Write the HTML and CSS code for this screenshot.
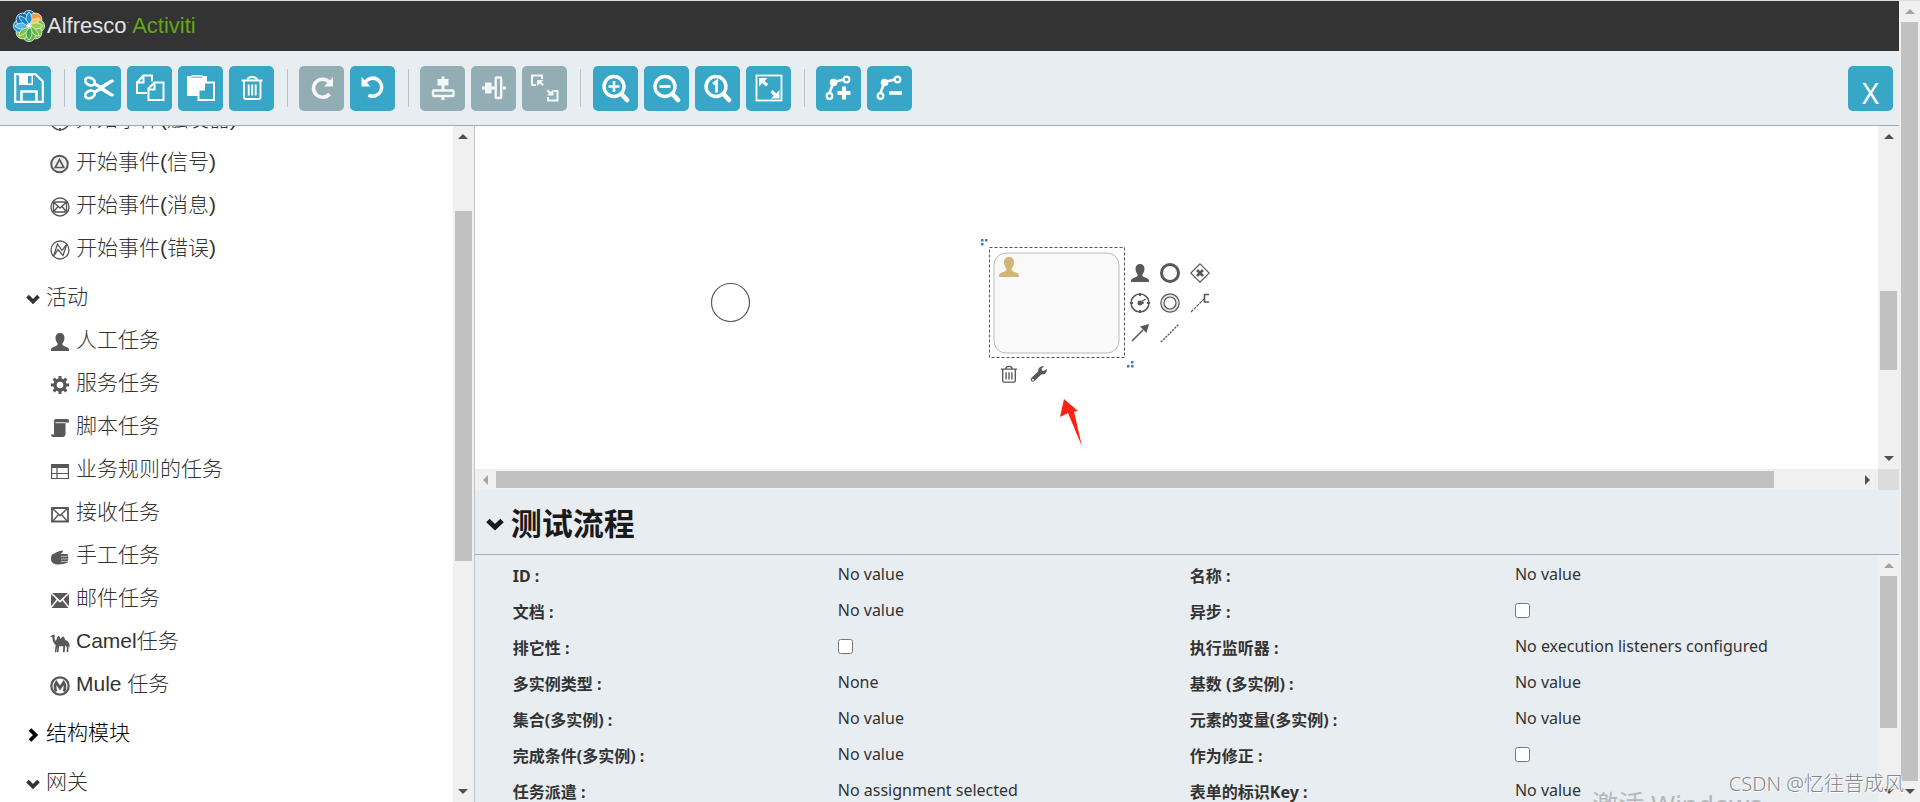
FILE: index.html
```
<!DOCTYPE html>
<html lang="zh-CN">
<head>
<meta charset="utf-8">
<title>Alfresco Activiti</title>
<link rel="stylesheet" href="styles.css">
</head>
<body>
<svg class="sprite" aria-hidden="true">
  <symbol id="i-person" viewBox="0 0 20 20"><path d="M10 1c3 0 4.600 2 4.500 5-.1 2.300-.9 4-2 5.200-.3 1.500.1 2.200 1.500 2.800l3.500 1.500c1.300.6 1.500 1.500 1.500 3.500H1c0-2 .2-2.900 1.500-3.500L6 14c1.400-.6 1.800-1.300 1.500-2.800-1.100-1.200-1.900-2.900-2-5.200C5.400 3 7 1 10 1z"/></symbol>
  <symbol id="i-timer" viewBox="0 0 20 20"><circle cx="10" cy="10" r="9" fill="none" stroke="currentColor" stroke-width="1.500"/><path d="M10 0v3M10 17v3M0 10h3M17 10h3" stroke="currentColor" stroke-width="2"/><circle cx="10" cy="10" r="2.500"/><path d="M10 10l5.500-4M10 10h4" stroke="currentColor" stroke-width="1.400"/></symbol>
  <symbol id="i-signal" viewBox="0 0 20 20"><circle cx="9.500" cy="10" r="8.300" fill="#eee" stroke="currentColor" stroke-width="2"/><path d="M9.500 5.500l4.300 8h-8.600z" fill="none" stroke="currentColor" stroke-width="1.600"/></symbol>
  <symbol id="i-message" viewBox="0 0 20 20"><g fill="none" stroke="currentColor" stroke-width="1.400"><circle cx="10" cy="10" r="9"/><path d="M3.500 5h13v10h-13zM3.500 5L10 11l6.500-6M3.500 15L8 9.500M16.500 15L12 9.500"/></g></symbol>
  <symbol id="i-error" viewBox="0 0 20 20"><g fill="none" stroke="currentColor" stroke-width="1.300"><circle cx="10" cy="10" r="9"/><path d="M3.500 16.500L7.500 4l4.500 6.500 5-6.500-4 11.500-5-6z"/></g></symbol>
  <symbol id="i-gear" viewBox="0 0 20 20"><circle cx="10" cy="10" r="5" fill="none" stroke="currentColor" stroke-width="3.400"/><path d="M10 1v3.500M10 15.500V19M1 10h3.500M15.500 10H19M3.600 3.600l2.500 2.500M13.900 13.900l2.500 2.500M16.400 3.600l-2.500 2.500M6.100 13.900l-2.500 2.500" stroke="currentColor" stroke-width="3"/></symbol>
  <symbol id="i-script" viewBox="0 0 20 20"><path d="M6 1h11c1.300 0 2 .9 2 2v1.500h-3.500v11c0 2-1 3.500-2.500 3.500H3c-1.300 0-2-1-2-2.500h3V5C3.500 3 4.300 1 6 1z"/><path d="M5.500 4.700h10" stroke="#fff" stroke-width=".9"/></symbol>
  <symbol id="i-table" viewBox="0 0 20 20"><path d="M1 3h18v4H1z"/><path d="M1.600 3.500h16.800v14H1.600zM1 12.500h18M7 7v10.500" fill="none" stroke="currentColor" stroke-width="1.200"/></symbol>
  <symbol id="i-receive" viewBox="0 0 20 20"><path d="M2 4h16v13.500H2z" fill="none" stroke="currentColor" stroke-width="1.800"/><path d="M2.500 4.500L10 11.500l7.500-7M3 17l5.500-6.500M17 17l-5.500-6.500" fill="none" stroke="currentColor" stroke-width="1.400"/></symbol>
  <symbol id="i-hand" viewBox="0 0 20 20"><path d="M2 7.500C5 6 8 4.500 11.500 3.500c1.500-.3 1.800 1.200.7 2L10.500 7H17c1.400 0 1.400 2 .3 2 1.600.2 1.600 2.500.2 2.600 1.100.2 1.100 2.300-.3 2.400.7.200.7 2-.5 2.100-2.200.7-5 1.400-8.200 1.400C4 17.500 1 15.500 1 12.500c0-2 .2-3.800 1-5z"/><path d="M11 9.400h6.500M11 12h6.500M11 14.500h6" stroke="#fff" stroke-width=".6"/></symbol>
  <symbol id="i-mail" viewBox="0 0 20 20"><path d="M1 3h18v15H1z"/><path d="M1 3l9 8.500L19 3M1 17.500L7.500 9.500M19 17.500L12.500 9.500" fill="none" stroke="#fff" stroke-width="1.700"/></symbol>
  <symbol id="i-camel" viewBox="0 0 20 20"><path d="M.3 3.200L3.500 1.500l1.400 1.200-.4 2 .7 3.300c1-.3 1.400-2 2-3.500.8-1.800 2-1.800 2.700-.2l.8 1.500 1.200-1.600c1-1.200 2-.9 2.500.6l.9 2.200c2.500.8 4 2.500 4.300 5l-.3 3-.6-2.500-.5 6.500h-1.600l.3-4.500-1.600-2.200-.7 6.900h-1.600l.2-6H9l-.5 6H7l.2-6-.9 6H4.800l.9-7.200C3.500 10 2.500 8.500 2.600 4.800z"/></symbol>
  <symbol id="i-mule" viewBox="0 0 20 20"><circle cx="10" cy="10" r="8.700" fill="none" stroke="currentColor" stroke-width="2.200"/><path d="M6 15.500C4.500 11.500 4.800 8.500 6.300 6.500L10 12l3.700-5.500c1.500 2 1.800 5 .3 9" fill="none" stroke="currentColor" stroke-width="2.800"/></symbol>
  <symbol id="i-down" viewBox="0 0 14 14"><path d="M1.500 4.200L7 9.500l5.500-5.300" fill="none" stroke="currentColor" stroke-width="3.800"/></symbol>
  <symbol id="i-right" viewBox="0 0 14 14"><path d="M4 1.500L9.500 7 4 12.500" fill="none" stroke="currentColor" stroke-width="3.800"/></symbol>
  <symbol id="i-trash" viewBox="0 0 20 20"><g fill="none" stroke="currentColor" stroke-width="1.500"><path d="M1 4.500h18M3 5v12.500c0 1 .5 1.500 1.500 1.500h11c1 0 1.500-.5 1.500-1.500V5M6.500 4.500c0-2 1.200-3 3.500-3s3.500 1 3.500 3M6.800 8v8M10 8v8M13.200 8v8"/></g></symbol>
  <symbol id="i-wrench" viewBox="0 0 20 20"><path d="M18.500 4.500l-3.300 2.200-2-.5-.4-2L15.600 1.500C12 .5 8.500 3 9.200 7L1.700 14.200c-2.500 3 1.200 5.800 3.600 3.400L12.500 10.500c4 .7 6.900-2.500 6-6zM3.300 17.400a1 1 0 110-2 1 1 0 010 2z"/></symbol>
  <symbol id="i-end" viewBox="0 0 20 20"><circle cx="10" cy="10" r="8.500" fill="none" stroke="currentColor" stroke-width="3"/></symbol>
  <symbol id="i-gateway" viewBox="0 0 20 20"><path d="M10 .8L19.200 10 10 19.200.8 10z" fill="none" stroke="currentColor" stroke-width="1.200"/><path d="M7 7l6 6M13 7l-6 6" stroke="currentColor" stroke-width="2.600"/></symbol>
  <symbol id="i-ring" viewBox="0 0 20 20"><circle cx="10" cy="10" r="9.200" fill="#e4e4e4" stroke="currentColor" stroke-width="1.200"/><circle cx="10" cy="10" r="6" fill="#fff" stroke="currentColor" stroke-width="1.200"/></symbol>
  <symbol id="i-note" viewBox="0 0 20 20"><path d="M1 19L14 6" fill="none" stroke="currentColor" stroke-width="1.200" stroke-dasharray="3 1"/><path d="M19 1.500h-4.500V9H19" fill="none" stroke="currentColor" stroke-width="1.600"/></symbol>
  <symbol id="i-flow" viewBox="0 0 20 20"><path d="M2 18L13 7" stroke="currentColor" stroke-width="1.600"/><path d="M19 1l-2.500 9L10 3.500z"/></symbol>
  <symbol id="i-assoc" viewBox="0 0 20 20"><path d="M1 19L19 1" stroke="currentColor" stroke-width="1.500" stroke-dasharray="2 1.200"/></symbol>

  <symbol id="t-save" viewBox="0 0 30 30"><path d="M1.200 1.200h20.300l7.300 7.300v20.300H1.200z" fill="none" stroke="currentColor" stroke-width="2.200"/><path d="M5 1h14v11H5z"/><path d="M14 3h3.500v7.500H14z" fill="#38a7c7"/><path d="M7.500 28v-9.500h15V28" fill="none" stroke="currentColor" stroke-width="2.600"/></symbol>
  <symbol id="t-cut" viewBox="0 0 30 30"><g fill="none" stroke="currentColor" stroke-width="2.600"><ellipse cx="6" cy="8.500" rx="5" ry="3.600" transform="rotate(25 6 8.500)"/><ellipse cx="6" cy="21.500" rx="5" ry="3.600" transform="rotate(-25 6 21.500)"/></g><path d="M10 9l7 3.500 9-5.500c2-1 4-.6 4 1.500L20 15l10 6.500c0 2-2 2.500-4 1.500l-9-5.500L10 21l-1-2.500 5.500-3.500L9 11.500z"/></symbol>
  <symbol id="t-copy" viewBox="0 0 30 30"><g fill="none" stroke="currentColor" stroke-width="2"><path d="M12 20H2V9.500L8.500 2.500H17v6M8.500 3v6.500H2M13.500 27V15.500l6-6H28.500V27zM19.500 10v6.500h-6"/></g></symbol>
  <symbol id="t-paste" viewBox="0 0 30 30"><path d="M1 3h4l1-1h10l1 1h4v7h-3l-6 6v7H1z"/><path d="M5.500 4.200h11" stroke="#38a7c7" stroke-width=".9"/><path d="M12.500 27V17l6-7.500H28V27z" fill="#38a7c7" stroke="currentColor" stroke-width="2"/><path d="M11.500 17.500l7.500-8v8z"/></symbol>
  <symbol id="t-trash" viewBox="0 0 30 30"><path d="M4.500 7.500h21M7 8v16c0 1.500.5 2 2 2h12.500c1.500 0 2-.5 2-2V8M10.500 7c0-2 1.500-3 4.700-3s4.700 1 4.700 3M11.700 11.500v11M15.200 11.500v11M18.700 11.500v11" fill="none" stroke="currentColor" stroke-width="1.900"/></symbol>
  <symbol id="t-redo" viewBox="0 0 30 30"><path d="M22.500 21a9 9 0 11-.5-12" fill="none" stroke="currentColor" stroke-width="3.600"/><path d="M26 4v9.500h-9z"/></symbol>
  <symbol id="t-undo" viewBox="0 0 30 30"><path d="M7 9.500a9 9 0 113.500 12.600" fill="none" stroke="currentColor" stroke-width="3.600"/><path d="M3.500 4v9.500h9z"/></symbol>
  <symbol id="t-alignv" viewBox="0 0 30 30"><path d="M13.500 3.500h3V6h4v6.500h-4V17h-3v-4.500h-4V6h4zM13.500 24h3v3h-3z"/><rect x="5" y="17.500" width="20.500" height="5.500" rx="1" fill="none" stroke="currentColor" stroke-width="2.400"/></symbol>
  <symbol id="t-alignh" viewBox="0 0 30 30"><path d="M3 13.500h3v-4h6.500v4H16v3h-3.500v4H6v-4H3zM24 13.500h3v3h-3z"/><rect x="16.700" y="4.500" width="5.500" height="20.500" rx="1" fill="none" stroke="currentColor" stroke-width="2.400"/></symbol>
  <symbol id="t-size" viewBox="0 0 30 30"><path d="M6 12H2V2.500h10V6M24 18h3.500v9.500H18V24" fill="none" stroke="currentColor" stroke-width="2"/><path d="M7 7h6.500l-2 2 2.500 2.500-1.600 1.600-2.500-2.500L7 13zM23.500 22.500h-6.500l2-2-2.500-2.500 1.600-1.600 2.500 2.500 2.900-2.400z"/></symbol>
  <symbol id="t-lens" viewBox="0 0 30 30"><circle cx="13" cy="13.500" r="10" fill="none" stroke="currentColor" stroke-width="3.400"/><path d="M20.500 21l5.500 6" stroke="currentColor" stroke-width="4.600" stroke-linecap="round"/></symbol>
  <symbol id="t-zoomin" viewBox="0 0 30 30"><use href="#t-lens"/><path d="M13 8v11M7.500 13.500h11" stroke="currentColor" stroke-width="2.600"/></symbol>
  <symbol id="t-zoomout" viewBox="0 0 30 30"><use href="#t-lens"/><path d="M7.500 13.500h11" stroke="currentColor" stroke-width="2.800"/></symbol>
  <symbol id="t-zoomone" viewBox="0 0 30 30"><use href="#t-lens"/><path d="M10 11l3.500-2.500v11" fill="none" stroke="currentColor" stroke-width="2.800"/></symbol>
  <symbol id="t-fit" viewBox="0 0 30 30"><rect x="2.500" y="2.500" width="25" height="25" fill="none" stroke="currentColor" stroke-width="1.800"/><path d="M5 5h8.500l-2.800 2.800 3.500 3.500-2.300 2.300-3.500-3.500L5 13.500zM25.500 25.500H17l2.800-2.800-3.500-3.500 2.300-2.300 3.500 3.500 3.400-3.400z"/></symbol>
  <symbol id="t-bend" viewBox="0 0 30 30"><path d="M5.500 20L9.500 9 20 6.500" fill="none" stroke="currentColor" stroke-width="2.600"/><circle cx="9.500" cy="9.500" r="3.800"/><circle cx="22.500" cy="6.500" r="2.800" fill="none" stroke="currentColor" stroke-width="2.200"/><circle cx="5.500" cy="23" r="2.800" fill="none" stroke="currentColor" stroke-width="2.200"/></symbol>
  <symbol id="t-addbend" viewBox="0 0 30 30"><use href="#t-bend"/><path d="M20 13.500v13M13.500 20h13" stroke="currentColor" stroke-width="4"/></symbol>
  <symbol id="t-delbend" viewBox="0 0 30 30"><use href="#t-bend"/><path d="M14 20h13" stroke="currentColor" stroke-width="3.600"/></symbol>
</svg>

<div class="page">
  <div class="app">
    <header class="topbar">
      <svg class="logo" viewBox="0 0 32 32" aria-hidden="true">
        <g stroke="#e8f2f6" stroke-width=".8">
          <circle cx="16" cy="6.800" r="6.400" fill="#0b78c2"/>
          <circle cx="22.500" cy="9.500" r="6.400" fill="#f79b34"/>
          <circle cx="25.200" cy="16" r="6.400" fill="#8cc63f"/>
          <circle cx="22.500" cy="22.500" r="6.400" fill="#7cbf3c"/>
          <circle cx="16" cy="25.200" r="6.400" fill="#5db446"/>
          <circle cx="9.500" cy="22.500" r="6.400" fill="#8cc63f"/>
          <circle cx="6.800" cy="16" r="6.400" fill="#2a9fd6"/>
          <circle cx="9.500" cy="9.500" r="6.400" fill="#0f6fbd"/>
          <path d="M16 16C12 12 12 6 16 2c4 4 4 10 0 14z" fill="#1f8fd0"/>
          <path d="M16 16c1-5 5-8 10-8 0 5-5 8-10 8z" fill="#fdc65a"/>
          <path d="M16 16c4-4 10-4 14 0-4 4-10 4-14 0z" fill="#9bd04e"/>
          <path d="M16 16c5 1 9 5 10 10-5 0-9-5-10-10z" fill="#6ab943"/>
          <path d="M16 16c4 4 4 10 0 14-4-4-4-10 0-14z" fill="#4aa844"/>
          <path d="M16 16c-1 5-5 9-10 10 0-5 5-9 10-10z" fill="#7cc242"/>
          <path d="M16 16c-4 4-10 4-14 0 4-4 10-4 14 0z" fill="#58b7e2"/>
          <path d="M16 16c-5-1-9-5-10-10 5 0 9 5 10 10z" fill="#1787cd"/>
        </g>
        <path d="M16 13v6M13 16h6M13.800 13.800l4.400 4.400M18.200 13.800l-4.400 4.400" stroke="#fff" stroke-width="1"/>
      </svg>
      <span class="brand">Alfresco<sup>·</sup></span><span class="brand brand-green">Activiti</span>
    </header>

    <div class="toolbar" role="toolbar">
      <button class="tool" aria-label="保存"><svg><use href="#t-save"/></svg></button>
      <span class="sep"></span>
      <button class="tool" aria-label="剪切"><svg><use href="#t-cut"/></svg></button>
      <button class="tool" aria-label="复制"><svg><use href="#t-copy"/></svg></button>
      <button class="tool" aria-label="粘贴"><svg><use href="#t-paste"/></svg></button>
      <button class="tool" aria-label="删除"><svg><use href="#t-trash"/></svg></button>
      <span class="sep"></span>
      <button class="tool off" aria-label="重做"><svg><use href="#t-redo"/></svg></button>
      <button class="tool" aria-label="撤销"><svg><use href="#t-undo"/></svg></button>
      <span class="sep"></span>
      <button class="tool off" aria-label="垂直对齐"><svg><use href="#t-alignv"/></svg></button>
      <button class="tool off" aria-label="水平对齐"><svg><use href="#t-alignh"/></svg></button>
      <button class="tool off" aria-label="相同大小"><svg><use href="#t-size"/></svg></button>
      <span class="sep"></span>
      <button class="tool" aria-label="放大"><svg><use href="#t-zoomin"/></svg></button>
      <button class="tool" aria-label="缩小"><svg><use href="#t-zoomout"/></svg></button>
      <button class="tool" aria-label="实际大小"><svg><use href="#t-zoomone"/></svg></button>
      <button class="tool" aria-label="适合屏幕"><svg><use href="#t-fit"/></svg></button>
      <span class="sep"></span>
      <button class="tool" aria-label="添加弯点"><svg><use href="#t-addbend"/></svg></button>
      <button class="tool" aria-label="删除弯点"><svg><use href="#t-delbend"/></svg></button>
      <button class="tool close">X</button>
    </div>

    <div class="main">
      <aside class="sidebar">
        <nav class="palette">
          <ul class="items">
            <li><svg><use href="#i-timer"/></svg>开始事件(触发器)</li>
            <li><svg><use href="#i-signal"/></svg>开始事件(信号)</li>
            <li><svg><use href="#i-message"/></svg>开始事件(消息)</li>
            <li><svg><use href="#i-error"/></svg>开始事件(错误)</li>
          </ul>
          <button class="group"><svg><use href="#i-down"/></svg>活动</button>
          <ul class="items">
            <li><svg><use href="#i-person"/></svg>人工任务</li>
            <li><svg><use href="#i-gear"/></svg>服务任务</li>
            <li><svg><use href="#i-script"/></svg>脚本任务</li>
            <li><svg><use href="#i-table"/></svg>业务规则的任务</li>
            <li><svg><use href="#i-receive"/></svg>接收任务</li>
            <li><svg><use href="#i-hand"/></svg>手工任务</li>
            <li><svg><use href="#i-mail"/></svg>邮件任务</li>
            <li><svg><use href="#i-camel"/></svg>Camel任务</li>
            <li><svg><use href="#i-mule"/></svg>Mule 任务</li>
          </ul>
          <button class="group closed"><svg><use href="#i-right"/></svg>结构模块</button>
          <button class="group"><svg><use href="#i-down"/></svg>网关</button>
        </nav>
        <div class="bar side-bar"><i class="arrow up"></i><span class="before"></span><span class="thumb"></span><span class="after"></span><i class="arrow down"></i></div>
      </aside>

      <section class="work">
        <div class="stage">
          <div class="canvas">
            <svg class="diagram">
              <circle cx="255.500" cy="176.500" r="19" fill="#fff" stroke="#585858" stroke-width="1.200"/>
              <rect x="519" y="127" width="125" height="100" rx="12" fill="#f9f9f9" stroke="#bbb"/>
              <rect x="514.500" y="121.500" width="135" height="110" fill="none" stroke="#555" stroke-dasharray="3 2"/>
              <use class="task-type" href="#i-person" x="523" y="130" width="22" height="22"/>
              <path d="M506 113h2.500v2.500H506zM510 113h2.500v2.500H510zM506 117h2.500v2.500H506z" fill="#4678b8"/>
              <path d="M656 235h2.500v2.500H656zM656 239h2.500v2.500H656zM652 239h2.500v2.500H652z" fill="#4678b8"/>
              <path d="M589 273l14 12-4 .5 8 35L593 287l-8 4z" fill="#ff2213"/>
            </svg>
            <div class="quick">
              <button aria-label="人工任务"><svg><use href="#i-person"/></svg></button>
              <button aria-label="结束事件"><svg><use href="#i-end"/></svg></button>
              <button aria-label="互斥网关"><svg><use href="#i-gateway"/></svg></button>
              <button aria-label="定时边界"><svg><use href="#i-timer"/></svg></button>
              <button aria-label="中间事件"><svg><use href="#i-ring"/></svg></button>
              <button aria-label="注释"><svg><use href="#i-note"/></svg></button>
              <button aria-label="顺序流"><svg><use href="#i-flow"/></svg></button>
              <button aria-label="关联"><svg><use href="#i-assoc"/></svg></button>
            </div>
            <div class="quick edit">
              <button aria-label="删除"><svg><use href="#i-trash"/></svg></button>
              <button aria-label="更改类型"><svg><use href="#i-wrench"/></svg></button>
            </div>
          </div>
          <div class="bar stage-bar"><i class="arrow up"></i><span class="before"></span><span class="thumb"></span><span class="after"></span><i class="arrow down"></i></div>
          <div class="bar flat"><i class="arrow left dim"></i><span class="thumb"></span><span class="after"></span><i class="arrow right"></i></div>
          <div class="corner"></div>
        </div>

        <div class="props">
          <h1 class="title"><svg><use href="#i-down"/></svg>测试流程</h1>
          <div class="props-body">
            <div class="fields">
              <span class="name">ID :</span><span class="value">No value</span>
              <span class="name">名称 :</span><span class="value">No value</span>
              <span class="name">文档 :</span><span class="value">No value</span>
              <label class="name" for="async">异步 :</label><span class="value"><input type="checkbox" id="async"></span>
              <label class="name" for="exclusive">排它性 :</label><span class="value"><input type="checkbox" id="exclusive"></span>
              <span class="name">执行监听器 :</span><span class="value">No execution listeners configured</span>
              <span class="name">多实例类型 :</span><span class="value">None</span>
              <span class="name">基数 (多实例) :</span><span class="value">No value</span>
              <span class="name">集合(多实例) :</span><span class="value">No value</span>
              <span class="name">元素的变量(多实例) :</span><span class="value">No value</span>
              <span class="name">完成条件(多实例) :</span><span class="value">No value</span>
              <label class="name" for="comp">作为修正 :</label><span class="value"><input type="checkbox" id="comp"></span>
              <span class="name">任务派遣 :</span><span class="value">No assignment selected</span>
              <span class="name">表单的标识Key :</span><span class="value">No value</span>
            </div>
            <div class="bar props-bar"><i class="arrow up dim"></i><span class="thumb"></span><span class="after"></span><i class="arrow down"></i></div>
          </div>
        </div>
      </section>
    </div>
  </div>
  <div class="bar page-bar"><i class="arrow up dim"></i><span class="thumb"></span><i class="arrow down"></i></div>
  <div class="activate">激活 Windows</div>
  <div class="credit">CSDN @忆往昔成风</div>
</div>
</body>
</html>
```
FILE: styles.css
```
* { box-sizing: border-box; }
body { margin: 0; font-family: "Noto Sans", "Noto Sans CJK SC", sans-serif; color: #333; }
button { border: 0; padding: 0; background: none; font: inherit; color: inherit; cursor: pointer; }
svg { fill: currentColor; display: block; flex: none; }
.sprite { position: absolute; width: 0; height: 0; }

.page { position: relative; display: flex; height: 100vh; overflow: hidden; border-top: 1px solid #dce0e2; background: #fff; }
.app { flex: 1; min-width: 0; display: flex; flex-direction: column; }

/* header */
.topbar { display: flex; align-items: center; height: 50px; padding: 0 13px; background: #333; flex: none; }
.logo { width: 32px; height: 32px; margin-right: 2px; }
.brand { font: 22px/32px "Liberation Sans", sans-serif; color: #e2e2e2; }
.brand sup { font-size: 8px; vertical-align: 8px; line-height: 8px; }
.brand-green { color: #64a51c; margin-left: 3px; }

.toolbar { display: flex; align-items: center; gap: 6px; height: 75px; padding: 0 6px; background: #e8edf1; border-bottom: 1px solid #a0abb9; flex: none; }
.tool { display: grid; place-items: center; width: 45px; height: 45px; border-radius: 5px; background: #38a7c7; color: #fff; }
.tool svg { width: 30px; height: 30px; }
.tool.off { background: #93adb5; color: #f4f7f8; }
.sep { width: 1px; height: 38px; margin: 0 5px 0 7px; background: #b9c2cb; }
.sep ~ .off + .off + .off + .sep { margin-right: 6px; }
.close { margin-left: auto; padding-top: 8px; font-size: 29px; line-height: 37px; }

.main { flex: 1; min-height: 0; display: flex; }

/* palette */
.sidebar { width: 25%; flex: none; display: flex; border-right: 1px solid #c0c4ca; }
.palette { flex: 1; overflow: hidden; font: 300 21px/43px "Liberation Sans", "Noto Sans CJK SC", sans-serif; color: #333; }
.items { list-style: none; margin: 0; padding: 0 0 0 50px; }
.items:first-child { margin-top: -29px; }
.items li { display: flex; align-items: center; gap: 6px; height: 43px; }
.items svg { width: 20px; height: 20px; margin-top: 4px; color: #585858; }
.group { display: flex; align-items: center; gap: 6px; width: 100%; height: 43px; margin-top: 6px; padding-left: 26px; color: #333; }
.group svg { width: 14px; height: 14px; margin-top: 4px; }
.group.closed { color: #000; }

/* scrollbars */
.bar { display: flex; flex-direction: column; align-items: center; width: 21px; flex: none; background: #f0f0f0; }
.thumb { width: 17px; background: #c1c1c1; }
.arrow { width: 21px; height: 21px; flex: none; display: grid; place-items: center; color: #505050; }
.arrow::before { content: ""; border: 5px solid transparent; }
.up::before { border-top: 0; border-bottom-color: currentColor; }
.down::before { border-bottom: 0; border-top-color: currentColor; }
.left::before { border-left: 0; border-right-color: currentColor; }
.right::before { border-right: 0; border-left-color: currentColor; }
.arrow.dim { color: #a3a3a3; }
.side-bar .before { flex: 64; }
.side-bar .thumb { flex: 350; }
.side-bar .after { flex: 220; }
.stage-bar .before { flex: 144; }
.stage-bar .thumb { flex: 79; }
.stage-bar .after { flex: 78; }
.props-bar .thumb { flex: 152; }
.props-bar .after { flex: 53; }
.page-bar .thumb { flex: 1; }
.bar.flat { flex-direction: row; width: auto; height: 21px; }
.flat .thumb { flex: 1278; height: 17px; }
.flat .after { flex: 83; }
.corner { background: #dcdcdc; }

/* stage */
.work { flex: 1; min-width: 0; display: flex; flex-direction: column; }
.stage { flex: 364 1 0; min-height: 0; display: grid; grid-template: minmax(0, 1fr) 21px / minmax(0, 1fr) 21px; }
.canvas { position: relative; overflow: hidden; background: #fff; }
.diagram { width: 100%; height: 100%; }
.task-type { color: #d1b575; fill: #d1b575; }
.quick { position: absolute; left: 655px; top: 137px; display: grid; grid-template-columns: repeat(3, 20px); gap: 10px; color: #585858; }
.quick.edit { left: 525px; top: 239px; }
.quick svg { width: 20px; height: 20px; }
.quick.edit svg { width: 18px; height: 18px; }

/* properties */
.props { flex: 312 1 0; min-height: 0; display: flex; flex-direction: column; background: #e8edf1; }
.title { display: flex; align-items: center; gap: 7px; height: 65px; flex: none; margin: 0; padding: 0 11px; border-bottom: 1px solid #a0abc0; font: bold 31px/62px "Noto Sans CJK SC", sans-serif; color: #1a1a1a; }
.title svg { width: 18px; height: 18px; margin-top: 4px; }
.props-body { flex: 1; min-height: 0; display: flex; }
.fields { flex: 1; min-width: 0; display: grid; grid-template-columns: 48fr 52fr 48fr 52fr; grid-auto-rows: 36px; padding: 1px 11px 0 38px; overflow: hidden; font-size: 16px; line-height: 36px; }
.name { font-weight: bold; font-size: 16px; padding-top: 2px; white-space: nowrap; }
.value { white-space: nowrap; }
.value input { display: block; width: 15px; height: 15px; margin: 11px 0; }

/* overlays */
.credit { position: absolute; right: 16px; bottom: 2px; font: 300 20px/32px "Noto Sans", "Noto Sans CJK SC", sans-serif; color: #85898d; text-shadow: 1px 1px 0 #fff; white-space: nowrap; }
.activate { position: absolute; right: 158px; bottom: -20px; font-size: 26px; line-height: 36px; color: #b4b8bb; white-space: nowrap; }
```
